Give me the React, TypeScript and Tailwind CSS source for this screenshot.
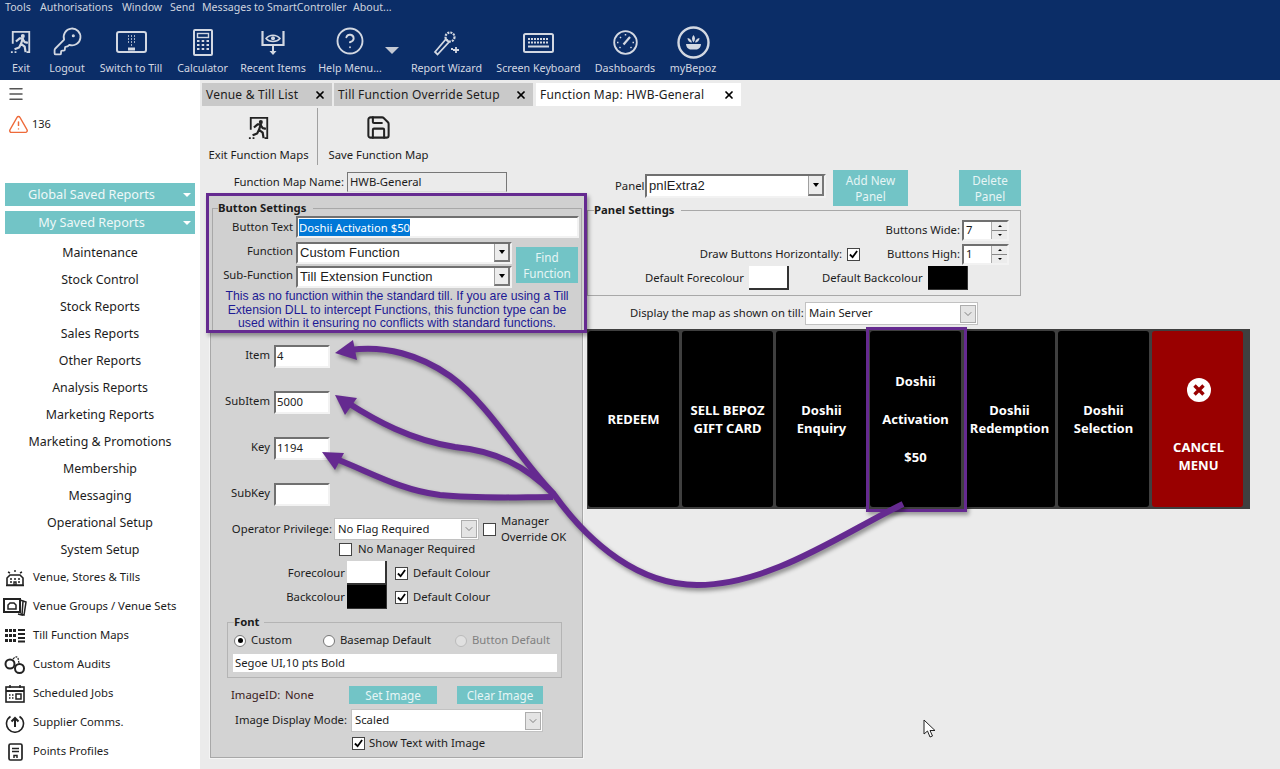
import type { ReactNode } from 'react';
import { ChevronDown, CircleHelp, KeyRound, Menu, Save, TriangleAlert, X } from 'lucide-react';

const reports = [
  'Maintenance',
  'Stock Control',
  'Stock Reports',
  'Sales Reports',
  'Other Reports',
  'Analysis Reports',
  'Marketing Reports',
  'Marketing & Promotions',
  'Membership',
  'Messaging',
  'Operational Setup',
  'System Setup',
];

function ExitIcon({ className }: { className: string }) {
  return (
    <svg viewBox="0 0 24 26" className={className} fill="none" stroke="currentColor">
      <path d="M3 15V2h18v22h-3" strokeWidth="2" />
      <path d="M1 24h2M5 24h2" strokeWidth="2" />
      <circle cx="14" cy="6.500" r="2.200" fill="currentColor" stroke="none" />
      <path d="M6.500 12.500l4-3.500h3.500l-2 6 4 3 1 6M12 15l-2 4-5 2M14 10l2 3 3.500 1" strokeWidth="2.400" />
    </svg>
  );
}

function TillIcon() {
  return (
    <svg viewBox="0 0 31 22" className="w-[31px] h-[22px]" fill="none">
      <rect x="1" y="1" width="29" height="20" rx="2" stroke="currentColor" strokeWidth="2" />
      <path d="M12 5h1M15 5h1M18 5h1M12 8h1M15 8h1M18 8h1M12 11h1M15 11h1M18 11h1M15 14h1" stroke="currentColor" strokeWidth="1.600" />
      <path d="M12 18h7" stroke="currentColor" strokeWidth="3" />
    </svg>
  );
}

function CalculatorIcon() {
  return (
    <svg viewBox="0 0 20 27" className="w-[20px] h-[27px]" fill="none" stroke="currentColor">
      <rect x="1" y="1" width="18" height="25" rx="1" strokeWidth="2" />
      <rect x="4.500" y="4.500" width="11" height="4" strokeWidth="1.400" />
      <path d="M4 12h2.500M8.700 12h2.500M13.500 12h2.500M4 16h2.500M8.700 16h2.500M13.500 16h2.500M4 20h2.500M8.700 20h2.500M13.500 20h2.500" strokeWidth="2.200" />
    </svg>
  );
}

function RecentIcon() {
  return (
    <svg viewBox="0 0 24 27" className="w-[24px] h-[27px]" fill="none" stroke="currentColor">
      <path d="M1.500 2v14h21V2" strokeWidth="2.200" />
      <path d="M12 16v8" strokeWidth="2" />
      <path d="M8.500 22l3.500 4 3.500-4z" fill="currentColor" stroke="none" />
      <path d="M5 9.500c3.500-4.500 10.500-4.500 14 0-3.500 4-10.500 4-14 0z" strokeWidth="1.500" />
      <circle cx="12" cy="9.300" r="2" fill="currentColor" stroke="none" />
    </svg>
  );
}

function WandIcon() {
  return (
    <svg viewBox="0 0 27 27" className="w-[27px] h-[27px]" fill="none" stroke="currentColor">
      <path d="M2 23l11-13 3 3L4.500 25.500z" strokeWidth="1.800" />
      <circle cx="17" cy="8" r="4.500" strokeWidth="2.200" strokeDasharray="2 1" />
      <path d="M23 18v6M20 21h6M18 20h2" strokeWidth="1.800" />
    </svg>
  );
}

function KeyboardIcon() {
  return (
    <svg viewBox="0 0 31 20" className="w-[31px] h-[20px]" fill="none" stroke="currentColor">
      <rect x="1" y="1" width="29" height="18" rx="1.500" strokeWidth="2" />
      <path d="M5 6h21M5 9.500h21" strokeWidth="2" strokeDasharray="2 1" />
      <path d="M5 13.500h21" strokeWidth="2" />
    </svg>
  );
}

function GaugeIcon() {
  return (
    <svg viewBox="0 0 25 25" className="w-[25px] h-[25px]" fill="none" stroke="currentColor">
      <circle cx="12.500" cy="12.500" r="11.300" strokeWidth="1.800" />
      <path d="M10.500 14.500L17 7" strokeWidth="2.200" />
      <path d="M12.500 4v1.500M5.500 12.500H4M21 12.500h-1.500M7 7l1 1M6.500 18l1-1M18.500 18l-1-1" strokeWidth="1.500" />
    </svg>
  );
}

function BepozIcon() {
  return (
    <svg viewBox="0 0 33 33" className="w-[33px] h-[33px]" fill="none">
      <circle cx="16.500" cy="16.500" r="15" stroke="currentColor" strokeWidth="2.400" />
      <path d="M9 18h15c0 3-2 5-4 5.500h-7C11 23 9 21 9 18z" fill="currentColor" />
      <path d="M16.500 9c-2 2-2 5 0 7.500 2-2.500 2-5.500 0-7.500zM10.500 12c0 2.500 2 4.500 4.500 4.500-.5-2.500-2-4-4.500-4.500zM22.500 12c-2.500.5-4 2-4.500 4.500 2.500 0 4.500-2 4.500-4.500z" fill="currentColor" />
    </svg>
  );
}

function VenueIcon() {
  return (
    <svg viewBox="0 0 20 18" className="w-[20px] h-[18px]" fill="none" stroke="#222">
      <path d="M2 16V9l3-3h10l3 3v7zM1 16.500h18" strokeWidth="1.600" />
      <path d="M5 10h2M9 10h2M13 10h2M5 13h2M13 13h2M9 13h2v3H9z" strokeWidth="1.400" />
      <path d="M3 3l2 1M10 1v2M17 3l-2 1" strokeWidth="1.400" />
    </svg>
  );
}

function GroupsIcon() {
  return (
    <svg viewBox="0 0 24 18" className="w-[24px] h-[18px]" fill="none" stroke="#222">
      <path d="M20 3l3 1-2 13-4-1M17 2l3 1-1 14-4-1" strokeWidth="1.500" />
      <rect x="1" y="1" width="16" height="13" fill="#fff" strokeWidth="2" />
      <path d="M5 11V7l2-2h4l2 2v4z" strokeWidth="1.500" />
    </svg>
  );
}

function MapsIcon() {
  return (
    <svg viewBox="0 0 20 14" className="w-[20px] h-[14px]" fill="#222">
      <path d="M0 0h3v3H0zM4 0h3v3H4zM8 0h3v3H8zM0 5h3v3H0zM4 5h3v3H4zM8 5h3v3H8zM0 10h3v3H0zM4 10h3v3H4zM8 10h3v3H8zM13 0h7v2h-7zM13 4h7v2h-7zM13 8h7v2h-7zM13 11.500h7v2h-7z" />
    </svg>
  );
}

function CuffsIcon() {
  return (
    <svg viewBox="0 0 22 19" className="w-[22px] h-[19px]" fill="none" stroke="#222">
      <circle cx="6" cy="9" r="4.500" strokeWidth="2" />
      <circle cx="15.500" cy="13.500" r="4.500" strokeWidth="2" />
      <path d="M9 4c2-2 4-3 5-1l1 5" strokeWidth="1.200" strokeDasharray="2 1" />
    </svg>
  );
}

function CalendarIcon() {
  return (
    <svg viewBox="0 0 20 18" className="w-[20px] h-[18px]" fill="none" stroke="#222">
      <rect x="1" y="2" width="18" height="15" strokeWidth="1.600" />
      <path d="M1 6h18" strokeWidth="2" />
      <path d="M5 0v3M15 0v3" strokeWidth="1.500" />
      <path d="M4 10h1.500M7 10h1.500M4 13h1.500M7 13h1.500" strokeWidth="1.500" />
      <rect x="11" y="9" width="5" height="5" strokeWidth="1.500" />
    </svg>
  );
}

function SupplierIcon() {
  return (
    <svg viewBox="0 0 20 20" className="w-[20px] h-[20px]" fill="none" stroke="#222">
      <path d="M5.500 3.500a8.500 8.500 0 1 0 9 0" strokeWidth="1.600" />
      <path d="M10 14V5M6.500 8.500L10 5l3.500 3.500" strokeWidth="2" />
    </svg>
  );
}

function ProfileIcon() {
  return (
    <svg viewBox="0 0 15 18" className="w-[15px] h-[18px]" fill="none" stroke="#222">
      <rect x="1" y="1" width="13" height="16" rx="1.500" strokeWidth="1.700" />
      <path d="M4 5.500h7M4 8.500h7" strokeWidth="1.500" />
      <path d="M6 15v-2.500h3V15" strokeWidth="1.500" />
    </svg>
  );
}

function ToolItem({ icon, label, w, top }: { icon: ReactNode; label: string; w: string; top: string }) {
  return (
    <div className={`${w} flex flex-col items-center text-[#d3d8e2]`}>
      <div className={`h-[35px] flex items-start ${top}`}>{icon}</div>
      <span className="whitespace-nowrap text-[10.700px] leading-[14px]">{label}</span>
    </div>
  );
}

function Header() {
  return (
    <div className="h-[80px] bg-[#0b2d67] shrink-0 overflow-hidden">
      <div className="h-[16px] flex items-center pl-[5px] text-[10.600px] text-[#ced4df]">
        <span className="w-[35px]">Tools</span>
        <span className="w-[82px]">Authorisations</span>
        <span className="w-[48px]">Window</span>
        <span className="w-[32px]">Send</span>
        <span className="w-[151px]">Messages to SmartController</span>
        <span>About...</span>
      </div>
      <div className="flex pl-[12px] gap-[14px] pt-[10px]">
        <ToolItem w="w-[18px]" top="pt-[3px]" label="Exit" icon={<ExitIcon className="w-[22px] h-[26px]" />} />
        <ToolItem w="w-[36px] ml-[5px]" top="pt-0" label="Logout" icon={<KeyRound size={31} strokeWidth={1.400} />} />
        <ToolItem w="w-[64px]" top="pt-[5px]" label="Switch to Till" icon={<TillIcon />} />
        <ToolItem w="w-[51px]" top="pt-[3px]" label="Calculator" icon={<CalculatorIcon />} />
        <ToolItem w="w-[64px] -ml-[1px]" top="pt-[3px]" label="Recent Items" icon={<RecentIcon />} />
        <ToolItem w="w-[62px]" top="pt-0" label="Help Menu..." icon={<CircleHelp size={30} strokeWidth={1.500} />} />
        <div className="w-[14px] -ml-[10px] -mr-[2px] pt-[21px]">
          <div className="w-0 h-0 border-x-[7px] border-x-transparent border-t-[7px] border-t-[#c4c9d4]" />
        </div>
        <ToolItem w="w-[71px]" top="pt-[3px]" label="Report Wizard" icon={<WandIcon />} />
        <ToolItem w="w-[83px] ml-[1px]" top="pt-[7px]" label="Screen Keyboard" icon={<KeyboardIcon />} />
        <ToolItem w="w-[60px] ml-[1px]" top="pt-[4px]" label="Dashboards" icon={<GaugeIcon />} />
        <ToolItem w="w-[46px] ml-[1px]" top="pt-0" label="myBepoz" icon={<BepozIcon />} />
      </div>
    </div>
  );
}

function Sidebar() {
  const links: [ReactNode, string][] = [
    [<VenueIcon />, 'Venue, Stores & Tills'],
    [<GroupsIcon />, 'Venue Groups / Venue Sets'],
    [<MapsIcon />, 'Till Function Maps'],
    [<CuffsIcon />, 'Custom Audits'],
    [<CalendarIcon />, 'Scheduled Jobs'],
    [<SupplierIcon />, 'Supplier Comms.'],
    [<ProfileIcon />, 'Points Profiles'],
  ];
  return (
    <div className="w-[200px] shrink-0 bg-white text-[#1c1c1c] text-[11.300px]">
      <Menu size={18} strokeWidth={2} className="ml-[7px] mt-[5px] text-[#555]" />
      <div className="flex items-start pl-[8px] mt-[11px] h-[69px]">
        <TriangleAlert size={21} strokeWidth={1.700} className="text-[#ee6a3a]" />
        <span className="ml-[3px] text-[11px] leading-[20px]">136</span>
      </div>
      <div className="mx-[5px] flex flex-col gap-[5px]">
        {['Global Saved Reports', 'My Saved Reports'].map((t) => (
          <div key={t} className="relative h-[23px] bg-[#72c4c6] text-[#eef8f8] text-[12.700px] leading-[23px] text-center pr-[17px]">
            {t}
            <span className="absolute right-[4px] top-[10px] w-0 h-0 border-x-[4px] border-x-transparent border-t-[4px] border-t-white" />
          </div>
        ))}
      </div>
      <div className="mt-[5px] flex flex-col text-center">
        {reports.map((r) => (
          <div key={r} className="h-[27px] leading-[27px] text-[12.400px]">
            {r}
          </div>
        ))}
      </div>
      <div className="flex flex-col">
        {links.map(([icon, label]) => (
          <div key={label} className="h-[29px] flex items-center">
            <div className="w-[33px] flex justify-center pl-[1px] pr-[4px]">{icon}</div>
            <span>{label}</span>
          </div>
        ))}
      </div>
    </div>
  );
}

function Tab({ label, w, active }: { label: string; w: string; active?: boolean }) {
  return (
    <div className={`${w} h-[23px] flex items-center justify-between pl-[4px] pr-[6px] text-[12px] tracking-[0.2px] ${active ? 'bg-white' : 'bg-[#c9c9c9]'}`}>
      <span className="whitespace-nowrap">{label}</span>
      <X size={12} strokeWidth={3.500} className="text-black" />
    </div>
  );
}

// sunken win32 edit box
function Sunken({ className, children }: { className: string; children?: ReactNode }) {
  return (
    <div className={`${className} bg-white border-2 border-t-[#707070] border-l-[#707070] border-r-[#f2f2f2] border-b-[#f2f2f2] flex items-center overflow-hidden`}>
      {children}
    </div>
  );
}

function Combo({ className, value }: { className: string; value: string }) {
  return (
    <Sunken className={className}>
      <span className="flex-1 pl-[2px] text-[13px] font-['Liberation_Sans',sans-serif] tracking-[0.1px] whitespace-nowrap">{value}</span>
      <span className="w-[16px] h-full bg-[#ececec] border-l border-[#a0a0a0] border-r-2 border-r-[#777] border-b-2 border-b-[#777] flex items-center justify-center">
        <span className="w-0 h-0 border-x-[3.500px] border-x-transparent border-t-[4px] border-t-black" />
      </span>
    </Sunken>
  );
}

function FlatCombo({ className, value }: { className: string; value: string }) {
  return (
    <div className={`${className} bg-white border border-[#c2c2c2] flex items-center pl-[3px] pr-[1px]`}>
      <span className="flex-1 whitespace-nowrap">{value}</span>
      <span className="w-[16px] h-[18px] bg-[#e4e4e4] border border-[#adadad] flex items-center justify-center">
        <ChevronDown size={12} strokeWidth={1.400} className="text-[#555]" />
      </span>
    </div>
  );
}

function Check({ on, className = '' }: { on?: boolean; className?: string }) {
  return (
    <span className={`${className} w-[13px] h-[13px] shrink-0 bg-white border border-[#444] flex items-center justify-center`}>
      {on ? (
        <svg viewBox="0 0 10 10" className="w-[9px] h-[9px]" fill="none" stroke="#000" strokeWidth="2">
          <path d="M1 5l3 3 5-7" />
        </svg>
      ) : null}
    </span>
  );
}

function Radio({ on, dim }: { on?: boolean; dim?: boolean }) {
  return (
    <span className={`w-[12px] h-[12px] rounded-full border shrink-0 flex items-center justify-center ${dim ? 'border-[#bbb] bg-[#e0e0e0]' : 'border-[#777] bg-white'}`}>
      {on ? <span className="w-[5px] h-[5px] rounded-full bg-black" /> : null}
    </span>
  );
}

function TealButton({ className, children }: { className: string; children: ReactNode }) {
  return (
    <button type="button" className={`${className} bg-[#72c4c6] text-[#e6f5f5] text-[11.700px] leading-[16px] text-center`}>
      {children}
    </button>
  );
}

function Swatch({ black, className = '' }: { black?: boolean; className?: string }) {
  return (
    <div className={`${className} w-[40px] h-[24px] shrink-0 ${black ? 'bg-black border-r border-b border-[#333]' : 'bg-white border-r-2 border-b-2 border-[#333]'}`} />
  );
}

function ButtonSettings() {
  return (
    <div className="relative z-10 w-[381px] h-[140px] border-[3px] border-[#652a90] bg-[#d0d0d0] shadow-[2px_3px_4px_rgba(0,0,0,0.35)]">
      <fieldset className="mt-[3px] ml-[3px] w-[370px] h-[131px] border border-b-0 border-[#a8a8a8]">
        <legend className="ml-[5px] pr-[7px] h-[18px] leading-[18px] font-bold">Button Settings</legend>
        <div className="flex items-center h-[22px] -mt-[1px]">
          <span className="w-[80px] text-right">Button Text</span>
          <Sunken className="ml-[3px] w-[283px] h-[22px]">
            <span className="ml-[1px] bg-[#0078d7] text-white leading-[17px] whitespace-nowrap">Doshii Activation $50</span>
          </Sunken>
        </div>
        <div className="flex mt-[4px]">
          <div className="flex flex-col gap-[2px]">
            <div className="flex items-center h-[22px]">
              <span className="w-[80px] text-right -mt-[4px]">Function</span>
              <Combo className="ml-[3px] w-[216px] h-[22px]" value="Custom Function" />
            </div>
            <div className="flex items-center h-[22px]">
              <span className="w-[80px] text-right -mt-[4px]">Sub-Function</span>
              <Combo className="ml-[3px] w-[216px] h-[22px]" value="Till Extension Function" />
            </div>
          </div>
          <TealButton className="ml-[4px] mt-[5px] w-[62px] h-[36px]">
            Find
            <br />
            Function
          </TealButton>
        </div>
        <p className="mt-[2px] text-center font-['Liberation_Sans',sans-serif] text-[12.250px] leading-[13.500px] text-[#1d1a94]">
          This as no function within the standard till. If you are using a Till
          <br />
          Extension DLL to intercept Functions, this function type can be
          <br />
          used within it ensuring no conflicts with standard functions.
        </p>
      </fieldset>
    </div>
  );
}

function ItemRow({ label, value }: { label: string; value?: string }) {
  return (
    <div className="flex items-center h-[23px] mb-[23px]">
      <span className="w-[59px] text-right -mt-[2px]">{label}</span>
      <Sunken className="ml-[4px] w-[56px] h-[23px]">
        <span className="pl-[1px]">{value}</span>
      </Sunken>
    </div>
  );
}

function LowerPanel() {
  return (
    <div className="ml-[4px] w-[373px] h-[425px] bg-[#d3d3d3] border border-t-0 border-[#a8a8a8] shadow-[0_0_0_1px_#f4f4f4] text-[#1c1c1c] pt-[12px]">
      <ItemRow label="Item" value="4" />
      <ItemRow label="SubItem" value="5000" />
      <ItemRow label="Key" value="1194" />
      <ItemRow label="SubKey" />
      <div className="flex items-center h-[22px] -mt-[11px]">
        <span className="w-[121px] text-right whitespace-nowrap">Operator Privilege:</span>
        <FlatCombo className="ml-[2px] w-[145px] h-[22px]" value="No Flag Required" />
        <Check className="ml-[4px]" />
        <span className="ml-[5px] leading-[16px] whitespace-nowrap">
          Manager
          <br />
          Override OK
        </span>
      </div>
      <div className="flex items-center h-[13px] mt-[3px] pl-[128px]">
        <Check />
        <span className="ml-[6px] whitespace-nowrap">No Manager Required</span>
      </div>
      <div className="flex items-center h-[24px] mt-[5px]">
        <span className="w-[134px] text-right">Forecolour</span>
        <Swatch className="ml-[2px]" />
        <Check on className="ml-[8px]" />
        <span className="ml-[5px] whitespace-nowrap">Default Colour</span>
      </div>
      <div className="flex items-center h-[24px]">
        <span className="w-[134px] text-right">Backcolour</span>
        <Swatch black className="ml-[2px]" />
        <Check on className="ml-[8px]" />
        <span className="ml-[5px] whitespace-nowrap">Default Colour</span>
      </div>
      <fieldset className="ml-[16px] mt-[4px] w-[335px] h-[65px] border border-[#b4b4b4]">
        <legend className="ml-[6px] pr-[4px] h-[18px] leading-[18px] font-bold">Font</legend>
        <div className="flex items-center h-[13px] mt-[3px]">
          <span className="ml-[6px]"><Radio on /></span>
          <span className="ml-[5px] w-[72px]">Custom</span>
          <Radio />
          <span className="ml-[5px] w-[115px] whitespace-nowrap">Basemap Default</span>
          <Radio dim />
          <span className="ml-[5px] text-[#808080] whitespace-nowrap">Button Default</span>
        </div>
        <div className="mt-[7px] ml-[5px] w-[324px] h-[18px] bg-white pl-[2px] leading-[18px]">Segoe UI,10 pts Bold</div>
      </fieldset>
      <div className="flex items-center h-[18px] mt-[8px] pl-[20px]">
        <span className="w-[54px] text-[#3a2020]">ImageID:</span>
        <span className="w-[64px] text-[#3a2020]">None</span>
        <TealButton className="w-[88px] h-[18px]">Set Image</TealButton>
        <TealButton className="ml-[20px] w-[86px] h-[18px]">Clear Image</TealButton>
      </div>
      <div className="flex items-center h-[23px] mt-[5px]">
        <span className="w-[136px] text-right whitespace-nowrap">Image Display Mode:</span>
        <FlatCombo className="ml-[4px] w-[192px] h-[23px]" value="Scaled" />
      </div>
      <div className="flex items-center h-[13px] mt-[5px] pl-[141px]">
        <Check on />
        <span className="ml-[4px] whitespace-nowrap">Show Text with Image</span>
      </div>
    </div>
  );
}

function Spin({ value }: { value: string }) {
  return (
    <Sunken className="ml-[2px] w-[47px] h-[21px]">
      <span className="flex-1 pl-[2px]">{value}</span>
      <span className="w-[16px] h-full flex flex-col bg-[#ececec] border-l border-[#aaa]">
        <span className="flex-1 flex items-center justify-center border-b border-[#888]">
          <span className="w-0 h-0 border-x-[2px] border-x-transparent border-b-[2px] border-b-black" />
        </span>
        <span className="flex-1 flex items-center justify-center">
          <span className="w-0 h-0 border-x-[2px] border-x-transparent border-t-[2px] border-t-black" />
        </span>
      </span>
    </Sunken>
  );
}

function TillButton({ lines, gap }: { lines: string[]; gap?: string }) {
  return (
    <div className={`w-[91px] h-[176px] bg-black rounded-[3px] flex flex-col items-center justify-center text-white font-bold text-[13px] leading-[18px] text-center ${gap ?? ''}`}>
      {lines.map((l) => (
        <span key={l} className="whitespace-nowrap">{l}</span>
      ))}
    </div>
  );
}

function TillPanel() {
  return (
    <div className="relative mt-[4px] w-[663px] h-[180px] bg-[#3f3f3f] flex gap-[3px] pl-[1px] pt-[2px]">
      <TillButton lines={['REDEEM']} />
      <TillButton lines={['SELL BEPOZ', 'GIFT CARD']} />
      <TillButton lines={['Doshii', 'Enquiry']} />
      <TillButton lines={['Doshii', 'Activation', '$50']} gap="gap-[20px]" />
      <TillButton lines={['Doshii', 'Redemption']} />
      <TillButton lines={['Doshii', 'Selection']} />
      <div className="w-[91px] h-[176px] bg-[#990000] rounded-[3px] flex flex-col items-center text-white font-bold text-[13px] leading-[18px] text-center pt-[47px] pl-[2px]">
        <svg viewBox="0 0 24 24" className="w-[24px] h-[24px]">
          <circle cx="12" cy="12" r="12" fill="#fff" />
          <path d="M7.500 7.500l9 9M16.500 7.500l-9 9" stroke="#990000" strokeWidth="3.400" />
        </svg>
        <span className="mt-[36px]">CANCEL</span>
        <span>MENU</span>
      </div>
      <div className="absolute left-[279px] -top-[2px] w-[101px] h-[185px] border-[3px] border-[#652a90] shadow-[2px_3px_4px_rgba(0,0,0,0.35)]" />
    </div>
  );
}

function RightColumn() {
  return (
    <div className="w-[693px] pt-[5px] text-[#1c1c1c]">
      <div className="flex h-[36px]">
        <span className="ml-[28px] mt-[8px] w-[30px]">Panel</span>
        <Combo className="mt-[4px] w-[181px] h-[24px]" value="pnlExtra2" />
        <TealButton className="ml-[7px] w-[75px] h-[36px]">
          Add New
          <br />
          Panel
        </TealButton>
        <TealButton className="ml-[51px] w-[62px] h-[36px]">
          Delete
          <br />
          Panel
        </TealButton>
      </div>
      <fieldset className="-mt-[5px] w-[434px] h-[95px] border border-[#a8a8a8]">
        <legend className="ml-[6px] pr-[7px] h-[18px] leading-[18px] font-bold">Panel Settings</legend>
        <div className="flex justify-end items-center h-[21px] mt-[1px] pr-[11px]">
          <span>Buttons Wide:</span>
          <Spin value="7" />
        </div>
        <div className="flex justify-end items-center h-[21px] mt-[3px] pr-[11px]">
          <span className="whitespace-nowrap">Draw Buttons Horizontally:</span>
          <Check on className="ml-[5px]" />
          <span className="ml-[27px]">Buttons High:</span>
          <Spin value="1" />
        </div>
        <div className="flex items-center h-[24px] mt-[1px] pl-[57px]">
          <span className="w-[104px] whitespace-nowrap">Default Forecolour</span>
          <Swatch />
          <span className="ml-[33px] w-[106px] whitespace-nowrap">Default Backcolour</span>
          <Swatch black />
        </div>
      </fieldset>
      <div className="flex items-center h-[23px] mt-[6px] pl-[43px]">
        <span className="w-[175px] whitespace-nowrap">Display the map as shown on till:</span>
        <FlatCombo className="w-[173px] h-[23px]" value="Main Server" />
      </div>
      <TillPanel />
    </div>
  );
}

function Main() {
  return (
    <div className="flex-1 bg-[#ebebeb] text-[#1c1c1c] text-[11.300px]">
      <div className="flex gap-[2px] pl-[2px] pt-[3px]">
        <Tab w="w-[130px]" label="Venue & Till List" />
        <Tab w="w-[199px]" label="Till Function Override Setup" />
        <Tab w="w-[205px] ml-[1px]" label="Function Map: HWB-General" active />
      </div>
      <div className="flex h-[57px] mt-[2px] pl-[8px]">
        <div className="w-[101px] flex flex-col items-center pt-[7px]">
          <ExitIcon className="w-[22px] h-[26px] text-[#222]" />
          <span className="mt-[6px] whitespace-nowrap">Exit Function Maps</span>
        </div>
        <div className="ml-[8px] w-[1px] bg-[#a0a0a0]" />
        <div className="ml-[10px] w-[101px] flex flex-col items-center pt-[6px]">
          <Save size={27} strokeWidth={1.800} className="text-[#222]" />
          <span className="mt-[6px] whitespace-nowrap">Save Function Map</span>
        </div>
      </div>
      <div className="flex pl-[6px]">
        <div className="w-[381px]">
          <div className="flex items-center h-[20px] mt-[7px] mb-[1px]">
            <span className="w-[138px] text-right whitespace-nowrap">Function Map Name:</span>
            <div className="ml-[3px] w-[160px] h-[20px] border border-[#777] border-b-[#ddd] pl-[2px] leading-[17px]">HWB-General</div>
          </div>
          <ButtonSettings />
          <LowerPanel />
        </div>
        <RightColumn />
      </div>
    </div>
  );
}

function Annotations() {
  return (
    <svg viewBox="0 0 1280 769" className="absolute inset-0 z-20 w-[1280px] h-[769px] pointer-events-none drop-shadow-[2px_3px_2px_rgba(0,0,0,0.4)]" fill="none" stroke="#652a90">
      <path d="M350 350C385 345 420 355 450 376C490 405 520 460 553 493C590 545 640 585 697 585C770 585 840 535 903 504" strokeWidth="6" />
      <path d="M348 403C375 420 410 440 455 447C495 451 525 465 553 494" strokeWidth="6" />
      <path d="M336 459C370 472 400 490 440 495C480 499 520 497 553 497" strokeWidth="6" />
      <path d="M335 353L353 340L357 360z" fill="#652a90" stroke="none" />
      <path d="M335 395L357 398L345 415z" fill="#652a90" stroke="none" />
      <path d="M322 452L344 453L335 470z" fill="#652a90" stroke="none" />
    </svg>
  );
}

function Cursor() {
  return (
    <svg viewBox="0 0 14 19" className="absolute left-[923px] top-[719px] z-20 w-[14px] h-[19px]" fill="#fff" stroke="#222" strokeWidth="1">
      <path d="M1 1v14l3.500-3 2.500 6 2.500-1-2.500-5.500h5z" />
    </svg>
  );
}

export default function App() {
  return (
    <div className="relative w-[1280px] h-[769px] overflow-hidden flex flex-col font-['Noto_Sans',sans-serif]">
      <Header />
      <div className="flex flex-1 min-h-0">
        <Sidebar />
        <Main />
      </div>
      <Annotations />
      <Cursor />
    </div>
  );
}
